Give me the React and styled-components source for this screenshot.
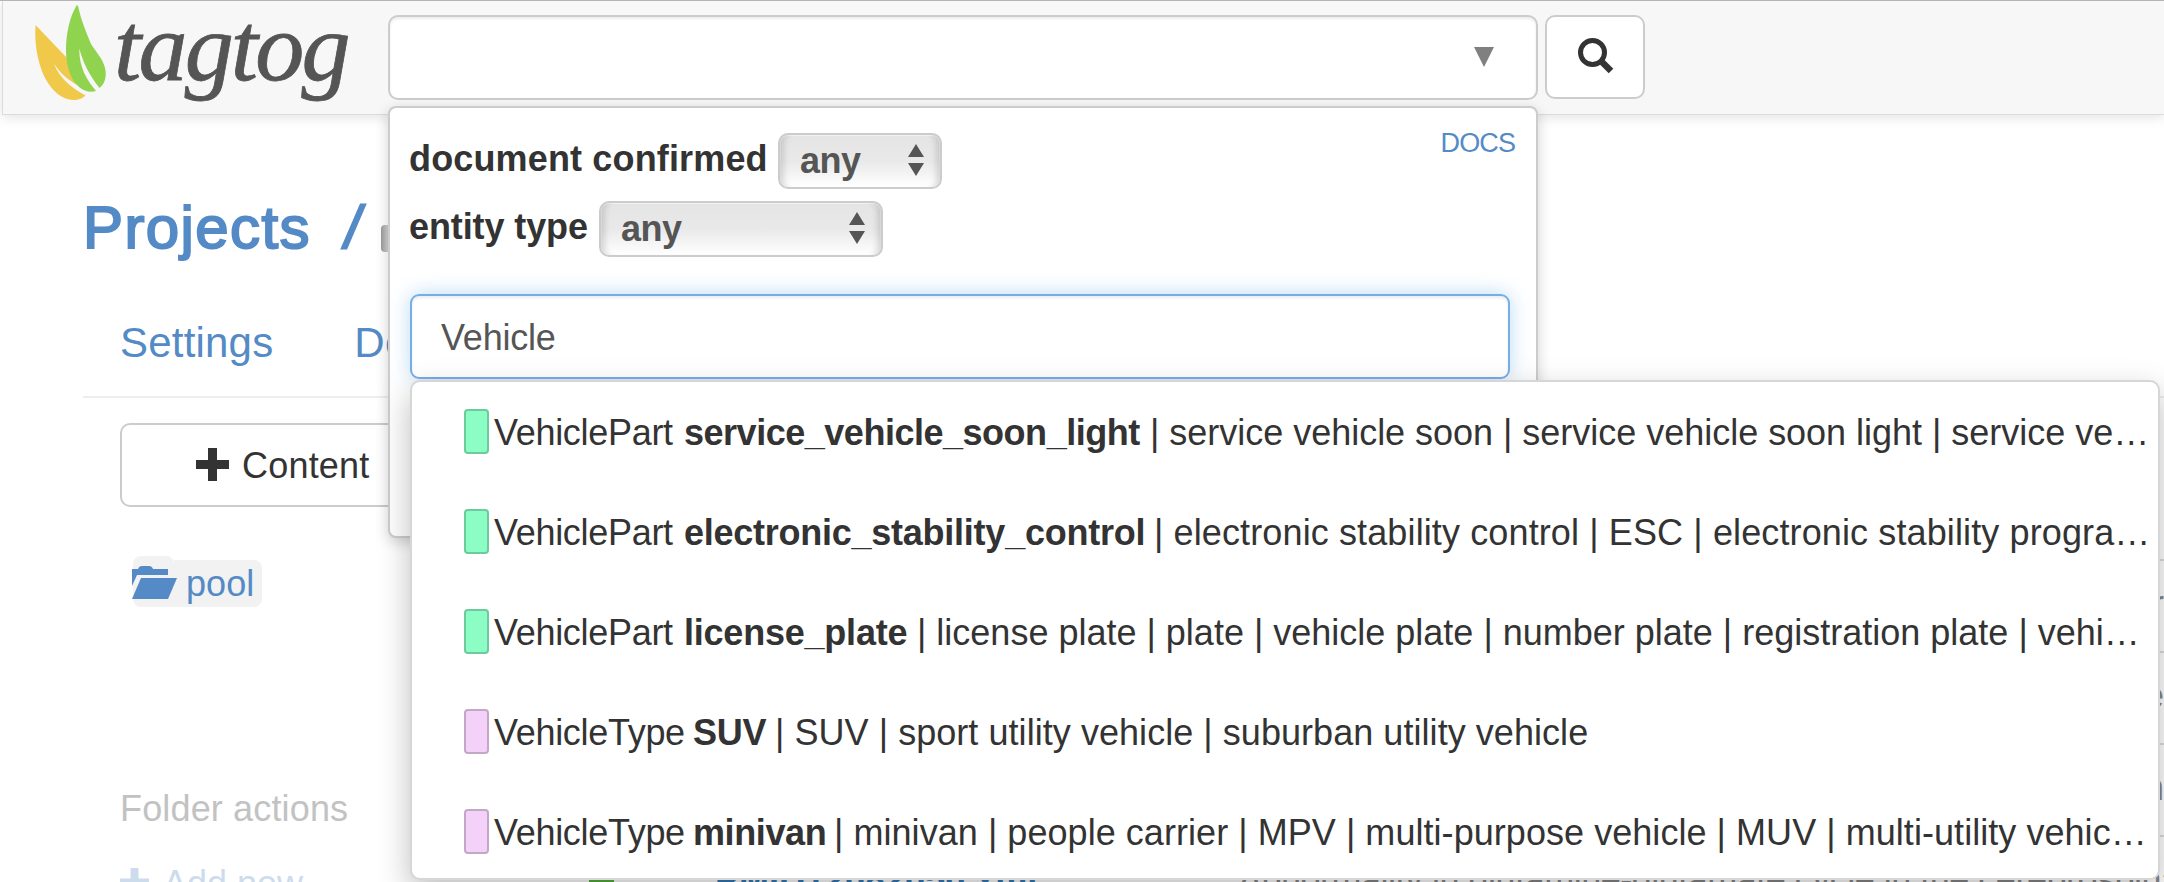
import React from "react";
import styled, { createGlobalStyle } from "styled-components";

const Global = createGlobalStyle`
  *, *::before, *::after { box-sizing: border-box; }
  body { margin: 0; background: #fff; }
`;

const BLUE = "#548ac5";

const Page = styled.div`
  width: 2164px;
  height: 882px;
  overflow: hidden;
  position: relative;
  background: #fff;
  color: #333;
  font: 36px/40px "Liberation Sans", Arial, sans-serif;
  white-space: nowrap;
`;

const Header = styled.header`
  position: relative;
  z-index: 2;
  display: flex;
  align-items: flex-start;
  height: 115px;
  margin-left: 2px;
  padding-left: 30px;
  background: #f7f7f7;
  border: solid #dcdcdc;
  border-width: 0 0 1px 1px;
  box-shadow: 0 2px 12px rgba(0, 0, 0, 0.12);
`;

const TopLine = styled.div`
  position: absolute;
  z-index: 3;
  top: 0;
  left: 0;
  right: 0;
  height: 1px;
  background: #b4b4b4;
`;

const Logo = styled.a`
  display: flex;
  width: 355px;
  height: 114px;
`;

const Wordmark = styled.span`
  margin-left: 2px;
  color: #555;
  font: italic 98px/94px "Liberation Serif", "Times New Roman", serif;
  letter-spacing: -2.8px;
  -webkit-text-stroke: 0.8px #555;
`;

const SearchArea = styled.div`
  position: relative;
  display: flex;
  gap: 7px;
  margin-top: 15px;
`;

const SearchBox = styled.div`
  display: flex;
  align-items: flex-start;
  justify-content: flex-end;
  width: 1150px;
  height: 85px;
  padding: 30px 42px 0 0;
  background: #fff;
  border: 2px solid #ccc;
  border-radius: 10px;
  box-shadow: inset 0 2px 3px rgba(0, 0, 0, 0.08);
`;

const SearchButton = styled.button`
  display: flex;
  align-items: center;
  justify-content: center;
  width: 100px;
  height: 84px;
  padding: 0 0 2px 2px;
  background: #fff;
  border: 2px solid #ccc;
  border-radius: 10px;
`;

const Panel = styled.div`
  position: absolute;
  top: 91px;
  left: 0;
  width: 1150px;
  height: 432px;
  padding: 25px 20px;
  background: #fff;
  border: 2px solid #ccc;
  border-radius: 8px;
  box-shadow: 0 4px 14px rgba(0, 0, 0, 0.18);
`;

const Filter = styled.div`
  display: flex;
  height: 56px;
  margin-bottom: 12px;
`;

const FilterLabel = styled.label`
  width: ${(p) => p.$width}px;
  margin-left: -1px;
  padding: 6px 0 0;
  font-weight: 700;
  letter-spacing: ${(p) => p.$track}px;
`;

const Select = styled.div`
  display: flex;
  justify-content: space-between;
  width: ${(p) => p.$width}px;
  height: 56px;
  padding: 6px 16px 0 20px;
  color: #555;
  font-weight: 700;
  letter-spacing: -0.5px;
  border: 2px solid #ccc;
  border-radius: 10px;
  background: linear-gradient(#e4e4e4, #e9e9e9 50%, #fff);
  box-shadow: inset 9px 0 7px -6px rgba(0, 0, 0, 0.16), inset -9px 0 7px -6px rgba(0, 0, 0, 0.16),
    inset 0 0 0 1px rgba(255, 255, 255, 0.6);
`;

const Steppers = styled.svg`
  margin-top: 3px;
`;

const DocsLink = styled.a`
  position: absolute;
  top: 15px;
  right: 21px;
  color: ${BLUE};
  font-size: 27px;
  letter-spacing: -0.9px;
`;

const QueryInput = styled.div`
  width: 1100px;
  height: 85px;
  margin-top: 37px;
  padding: 22px 29px;
  color: #555;
  letter-spacing: -0.2px;
  border: 2px solid #76aee6;
  border-radius: 9px;
  box-shadow: inset 0 2px 3px rgba(0, 0, 0, 0.08), 0 0 20px rgba(102, 175, 233, 0.45);
`;

const Suggestions = styled.ul`
  position: absolute;
  top: 365px;
  left: 22px;
  width: 1750px;
  height: 500px;
  margin: 0;
  padding: 7px 0 0 52px;
  list-style: none;
  background: #fff;
  border: 2px solid #d6d6d6;
  border-radius: 10px;
  box-shadow: 0 12px 32px rgba(0, 0, 0, 0.26);
`;

const Suggestion = styled.li`
  display: flex;
  height: 100px;
  padding-top: 20px;
`;

const Swatch = styled.span`
  width: 25px;
  height: 45px;
  margin-right: 5px;
  border-radius: 4px;
  background: ${(p) => (p.$kind === "VehiclePart" ? "#8cfdc5" : "#f3d1f9")};
  border: 2px solid ${(p) => (p.$kind === "VehiclePart" ? "#6dca9d" : "#c3a7c7")};
`;

const Kind = styled.span`
  width: ${(p) => p.$width}px;
  padding-top: 4px;
  letter-spacing: -0.3px;
`;

const Name = styled.b`
  width: ${(p) => p.$width}px;
  padding-top: 4px;
  letter-spacing: ${(p) => p.$track}px;
`;

const Aliases = styled.span`
  padding-top: 4px;
  letter-spacing: ${(p) => p.$track}px;
`;

const Main = styled.main`
  padding: 78px 0 0 83px;
`;

const Breadcrumb = styled.h1`
  display: flex;
  height: 70px;
  margin: 0;
  color: ${BLUE};
  font-size: 60px;
  font-weight: 400;
  line-height: 70px;
  letter-spacing: 1.4px;
  -webkit-text-stroke: 2px ${BLUE};
`;

const Slash = styled.span`
  width: 18px;
  margin-left: 34px;
  transform: skewX(-9deg);
`;

const ProjectChip = styled.span`
  width: 30px;
  height: 27px;
  margin: 32px 0 0 18px;
  background: linear-gradient(90deg, #999, #ccc 6px);
  border-radius: 4px;
`;

const Tabs = styled.nav`
  display: flex;
  gap: 81px;
  height: 135px;
  padding: 55px 0 0 37px;
  color: ${BLUE};
  font-size: 42px;
  line-height: 50px;
  letter-spacing: 0.2px;
  border-bottom: 2px solid #eee;
`;

const Columns = styled.div`
  display: flex;
`;

const Sidebar = styled.aside`
  display: flex;
  flex-direction: column;
  align-items: flex-start;
  width: 400px;
  flex-shrink: 0;
  padding: 25px 0 0 37px;
`;

const ContentButton = styled.button`
  display: flex;
  align-items: flex-start;
  gap: 11px;
  width: 330px;
  height: 84px;
  padding: 20px 0 0 74px;
  color: #333;
  font: inherit;
  letter-spacing: 0.2px;
  background: #fff;
  border: 2px solid #ccc;
  border-radius: 10px;
`;

const ContentLabel = styled.span`
  padding-top: 1px;
`;

const Folder = styled.a`
  display: flex;
  height: 51px;
  margin: 49px 0 0 13px;
  color: ${BLUE};
  letter-spacing: 0.1px;
`;

const FolderIconBox = styled.span`
  width: 41px;
  height: 51px;
  padding-top: 10px;
  background: #f2f2f2;
  border-radius: 8px 8px 0 8px;
`;

const FolderName = styled.span`
  width: 88px;
  height: 47px;
  margin-top: 4px;
  padding: 4px 0 0 12px;
  background: #f2f2f2;
  border-radius: 0 8px 8px 0;
`;

const FolderSvg = styled.svg`
  display: block;
  position: relative;
  z-index: 1;
  margin-left: -1px;
`;

const SectionTitle = styled.div`
  margin-top: 182px;
  color: #c2c2c2;
  letter-spacing: 0.15px;
`;

const AddNew = styled.a`
  display: flex;
  gap: 14px;
  margin-top: 35px;
  color: #cddcec;
  svg { margin-top: 4px; }
`;

const Documents = styled.div`
  flex: 1;
  min-width: 0;
  margin-top: 161px;
  overflow: hidden;
`;

const DocRow = styled.div`
  display: flex;
  height: 92px;
  padding: 23px 0 0 106px;
  border-top: 2px solid #ddd;
`;

const StatusIcon = styled.svg`
  flex: none;
  margin-top: -4px;
`;

const FileName = styled.a`
  flex: 0 0 523px;
  margin-left: 101px;
  color: #337ab7;
  font-weight: 700;
`;

const Title = styled.span`
  color: #888;
  letter-spacing: -0.5px;
`;

const EdgeText = styled(Title)`
  margin-left: auto;
  letter-spacing: 0;
`;

const Plus = ({ size }) => (
  <svg width={size} height={size} viewBox="0 0 33 33">
    <path fill="currentColor" d="M12 0h9v12h12v9H21v12h-9V21H0v-9h12z" />
  </svg>
);

const Stepper = () => (
  <Steppers width="16" height="32" viewBox="0 0 16 32">
    <path fill="#555" d="M8 0l8 13H0zM8 32l8-13H0z" />
  </Steppers>
);

const suggestions = [
  { kind: "VehiclePart", name: "service_vehicle_soon_light", kw: 190, nw: 466, track: -0.48, restTrack: -0.02, rest: "| service vehicle soon | service vehicle soon light | service ve…" },
  { kind: "VehiclePart", name: "electronic_stability_control", kw: 190, nw: 470, track: -0.25, restTrack: 0.12, rest: "| electronic stability control | ESC | electronic stability progra…" },
  { kind: "VehiclePart", name: "license_plate", kw: 190, nw: 233, track: -0.22, restTrack: 0, rest: "| license plate | plate | vehicle plate | number plate | registration plate | vehi…" },
  { kind: "VehicleType", name: "SUV", kw: 199, nw: 82, track: -0.3, restTrack: 0.05, rest: "| SUV | sport utility vehicle | suburban utility vehicle" },
  { kind: "VehicleType", name: "minivan", kw: 199, nw: 141, track: -0.4, restTrack: 0.05, rest: "| minivan | people carrier | MPV | multi-purpose vehicle | MUV | multi-utility vehic…" },
];

export default function App() {
  return (
    <Page>
      <Global />
      <TopLine />
      <Header>
        <Logo>
          <svg width="79" height="104" viewBox="33 0 79 104">
            <path fill="#f0c94a" d="M35.5 25C34 47 39 69 48 83C56 95 65 100 74 100C79 100 83 98 85.500 95.500C72 88 59 78 54 63.500C60 73 68 80 77 85L68 59Z" />
            <path fill="#8fd34f" d="M76.800 5C70 16 66 33 66 50C66 67 71 80 79 87C84 91 90 93 96 91C87 80 79 68 79.300 48.500C83 63 90 76 99.500 88C105 84 107 76 105 68C103 59 96 52 91 44C86 32 81 20 78 6Z" />
          </svg>
          <Wordmark>tagtog</Wordmark>
        </Logo>
        <SearchArea>
          <SearchBox>
            <svg width="20" height="20" viewBox="0 0 20 20">
              <path fill="#808080" d="M0 0h20L10 20z" />
            </svg>
          </SearchBox>
          <SearchButton>
            <svg width="36" height="36" viewBox="0 0 36 36" fill="none" stroke="#333">
              <circle cx="14.500" cy="14.500" r="12" strokeWidth="5" />
              <path d="M23 23L33 33" strokeWidth="6.500" />
            </svg>
          </SearchButton>
          <Panel>
            <Filter>
              <FilterLabel $width={369} $track={0.15}>document confirmed</FilterLabel>
              <Select $width={164}>any<Stepper /></Select>
            </Filter>
            <Filter>
              <FilterLabel $width={190} $track={-0.1}>entity type</FilterLabel>
              <Select $width={284}>any<Stepper /></Select>
            </Filter>
            <DocsLink>DOCS</DocsLink>
            <QueryInput>Vehicle</QueryInput>
          </Panel>
          <Suggestions>
            {suggestions.map((s) => (
              <Suggestion key={s.name}>
                <Swatch $kind={s.kind} />
                <Kind $width={s.kw}>{s.kind}</Kind>
                <Name $width={s.nw} $track={s.track}>{s.name}</Name>
                <Aliases $track={s.restTrack}>{s.rest}</Aliases>
              </Suggestion>
            ))}
          </Suggestions>
        </SearchArea>
      </Header>
      <Main>
        <Breadcrumb>
          <span>Projects</span>
          <Slash>/</Slash>
          <ProjectChip />
        </Breadcrumb>
        <Tabs>
          <span>Settings</span>
          <span>Do</span>
        </Tabs>
        <Columns>
          <Sidebar>
            <ContentButton>
              <svg width="35" height="36" viewBox="0 0 35 36">
                <path fill="#333" d="M12 3h9v12h12v9H21v12h-9V24H0v-9h12z" />
              </svg>
              <ContentLabel>Content</ContentLabel>
            </ContentButton>
            <Folder>
              <FolderIconBox>
                <FolderSvg width="45" height="33" viewBox="0 0 45 33">
                  <path fill={BLUE} d="M0 3H6Q7 0 10 0H17Q20 0 21 3H36V9H5L0 20Z" />
                  <path fill={BLUE} d="M9 12H45L36 33H0Z" />
                </FolderSvg>
              </FolderIconBox>
              <FolderName>pool</FolderName>
            </Folder>
            <SectionTitle>Folder actions</SectionTitle>
            <AddNew>
              <Plus size={29} />
              Add new
            </AddNew>
          </Sidebar>
          <Documents>
            <DocRow><EdgeText>r</EdgeText></DocRow>
            <DocRow><EdgeText>e</EdgeText></DocRow>
            <DocRow><EdgeText>n</EdgeText></DocRow>
            <DocRow>
              <StatusIcon width="25" height="36" viewBox="0 0 25 36">
                <path fill="#55b03a" d="M0 0h25v36H0z" />
              </StatusIcon>
              <FileName>PMID12082050.xml</FileName>
              <Title>Abnormality in glutamine-glutamate cycle in the cerebrospinal</Title>
            </DocRow>
          </Documents>
        </Columns>
      </Main>
    </Page>
  );
}
